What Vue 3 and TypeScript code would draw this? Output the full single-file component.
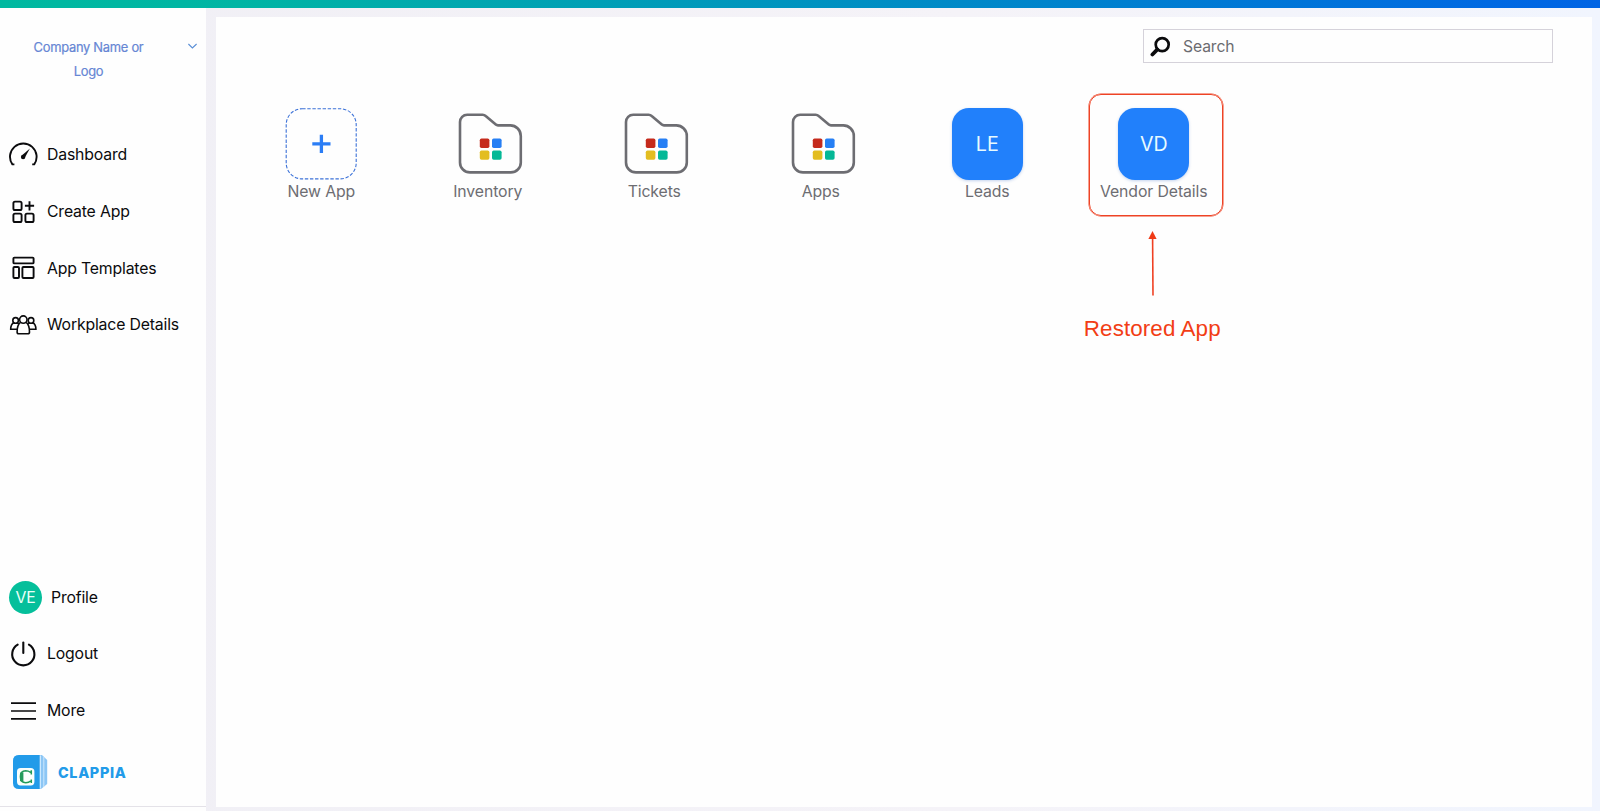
<script setup lang="ts">
interface Tile {
  label: string
  kind: 'new' | 'folder' | 'app'
  initials?: string
  highlighted?: boolean
}

const tiles: Tile[] = [
  { label: 'New App', kind: 'new' },
  { label: 'Inventory', kind: 'folder' },
  { label: 'Tickets', kind: 'folder' },
  { label: 'Apps', kind: 'folder' },
  { label: 'Leads', kind: 'app', initials: 'LE' },
  { label: 'Vendor Details', kind: 'app', initials: 'VD', highlighted: true },
]
</script>

<template>
  <div class="page">
    <div class="topbar"></div>
    <div class="body">
      <aside class="sidebar">
        <div class="company">
          <span class="company-name">Company Name or<br />Logo</span>
          <svg class="chevron" width="12" height="8" viewBox="0 0 12 8">
            <path d="M1.4 2 L5.4 6 L9.6 2" fill="none" stroke="#5b8fd6" stroke-width="1.1" />
          </svg>
        </div>

        <nav class="nav">
          <a class="row">
            <svg class="icon" width="30" height="30" viewBox="0 0 30 30" fill="none" stroke="#0b0b0d">
              <path d="M6.4 24.4 H4.4 A13.3 13.3 0 1 1 26.2 24.4 H24.2" stroke-width="1.9" />
              <path d="M13.8 15.6 L21.9 8.6 L16.9 17.6Z" fill="#0b0b0d" stroke="none" />
              <circle cx="15.1" cy="17" r="2.2" fill="#0b0b0d" stroke="none" />
            </svg>
            <span>Dashboard</span>
          </a>
          <a class="row">
            <svg class="icon" width="30" height="30" viewBox="0 0 30 30" fill="none" stroke="#0b0b0d" stroke-width="1.9">
              <rect x="5.4" y="4.6" width="8.2" height="8.4" rx="1.6" />
              <rect x="5.4" y="16.6" width="8.2" height="8.4" rx="1.6" />
              <rect x="17.4" y="16.6" width="8.2" height="8.4" rx="1.6" />
              <path d="M21.5 4.2 V13.4 M16.9 8.8 H26.1" />
            </svg>
            <span>Create App</span>
          </a>
          <a class="row">
            <svg class="icon" width="30" height="30" viewBox="0 0 30 30" fill="none" stroke="#0b0b0d" stroke-width="1.9">
              <rect x="5.4" y="4.6" width="20.2" height="5.8" rx="1" />
              <rect x="5.4" y="14" width="5.6" height="11" rx="1" />
              <rect x="14.4" y="14" width="11.2" height="11" rx="1" />
            </svg>
            <span>App Templates</span>
          </a>
          <a class="row">
            <svg class="icon" width="30" height="30" viewBox="0 0 30 30" fill="none" stroke="#0b0b0d" stroke-width="1.6">
              <circle cx="7.6" cy="10.4" r="2.8" />
              <circle cx="23" cy="10.4" r="2.8" />
              <circle cx="15.3" cy="9.6" r="3.7" />
              <path d="M12.5 12.4 C10.2 14 9.2 16.6 9.1 21.9 Q9.1 23.8 10.8 23.8 H19.8 Q21.5 23.8 21.5 21.9 C21.4 16.6 20.4 14 18.1 12.4" />
              <path d="M5.9 12.5 C3.7 13.8 2.7 16 2.7 19.2 H9.2 M9.2 12.6 L10.9 14.1" />
              <path d="M24.7 12.5 C26.9 13.8 27.9 16 27.9 19.2 H21.4 M21.4 12.6 L19.7 14.1" />
            </svg>
            <span>Workplace Details</span>
          </a>
        </nav>

        <div class="nav nav-bottom">
          <a class="row profile">
            <span class="avatar">VE</span>
            <span>Profile</span>
          </a>
          <a class="row">
            <svg class="icon" width="30" height="30" viewBox="0 0 30 30" fill="none" stroke="#0b0b0d" stroke-width="2.1" stroke-linecap="round">
              <path d="M9.7 5.7 A11.1 11.1 0 1 0 20.9 5.7" />
              <path d="M15.3 3.6 V14" />
            </svg>
            <span>Logout</span>
          </a>
          <a class="row">
            <svg class="icon" width="30" height="30" viewBox="0 0 30 30" stroke="#0b0b0d" stroke-width="1.7">
              <path d="M3 7.2 H28 M3 15 H28 M3 22.8 H28" />
            </svg>
            <span>More</span>
          </a>
        </div>

        <div class="brand">
          <svg class="brand-mark" width="35" height="36" viewBox="0 0 35 36">
            <path d="M6 1 H29 L34.2 6 V30 L28 35 H6 L0 29 V7 Q0 1 6 1Z" fill="#8cc6f5" />
            <path d="M6 1 H26.6 V35 H6 Q0 35 0 29 V7 Q0 1 6 1Z" fill="#229be9" />
            <path d="M27.4 1.5 V34.5" stroke="#d4edff" stroke-width="1" />
            <path d="M30.8 3 V33" stroke="#cbe7fc" stroke-width="1" />
            <rect x="4" y="14" width="17.4" height="17.4" rx="3.6" fill="#fafffc" />
            <path d="M18.3 20.4 V16.3 M17.6 18.3 Q15.4 16.8 12.6 16.8 Q7.4 17 7.4 22.8 Q7.4 28.6 12.8 28.7 Q15.8 28.7 17.6 27 M18.3 29 V25.4" fill="none" stroke="#239b5b" stroke-width="1.5" />
            <path d="M8.7 18.6 V27.2" stroke="#239b5b" stroke-width="3.4" />
          </svg>
          <span class="brand-name">CLAPPIA</span>
        </div>
        <div class="sidebar-end"></div>
      </aside>

      <main class="main">
        <div class="search">
          <svg width="21" height="21" viewBox="0 0 21 21" fill="none" stroke="#0b0b0d">
            <circle cx="12.2" cy="8.6" r="6.5" stroke-width="2.7" />
            <path d="M7.2 13.6 L2.4 18.5" stroke-width="3.8" stroke-linecap="round" />
          </svg>
          <span>Search</span>
        </div>

        <section class="tiles">
          <div v-for="tile in tiles" :key="tile.label" class="tile">
            <div v-if="tile.kind === 'new'" class="tile-art">
              <svg width="72" height="72" viewBox="0 0 72 72" fill="none">
                <rect x="1.2" y="0.7" width="70" height="70.2" rx="16" stroke="#3c72d8" stroke-width="1.1" stroke-dasharray="3.4 1.7" />
                <path d="M36.4 26.7 V44.9 M27.3 35.8 H45.5" stroke="#2b7df5" stroke-width="3.3" />
              </svg>
            </div>
            <div v-else-if="tile.kind === 'folder'" class="tile-art">
              <svg class="folder" width="72" height="72" viewBox="0 0 72 72">
                <path
                  d="M10.2 6.8 H25.6 Q27.4 6.8 28.7 8 L38.8 16.6 Q39.7 17.4 41 17.4 H53.3 A10.5 10.5 0 0 1 63.8 28 V54.4 A10 10 0 0 1 53.8 64.4 H13 A10 10 0 0 1 3 54.4 V14 A7.2 7.2 0 0 1 10.2 6.8Z"
                  fill="none" stroke="#6d6d72" stroke-width="2.6" />
                <rect x="22.8" y="30.5" width="9.6" height="9.4" rx="1.7" fill="#c52a1c" />
                <rect x="35" y="30.5" width="9.6" height="9.4" rx="1.7" fill="#267ff4" />
                <rect x="22.8" y="42.6" width="9.6" height="9.2" rx="1.7" fill="#e3bd20" />
                <rect x="35" y="42.6" width="9.6" height="9.2" rx="1.7" fill="#04b896" />
              </svg>
            </div>
            <div v-else class="tile-art app">{{ tile.initials }}</div>
            <span class="tile-label">{{ tile.label }}</span>

            <div v-if="tile.highlighted" class="callout">
              <div class="callout-frame"></div>
              <svg class="callout-arrow" width="10" height="66" viewBox="0 0 10 66">
                <path d="M4.6 8 L5 65.5" stroke="#ef4023" stroke-width="1.6" />
                <path d="M4.5 1 L8.6 9 H0.4Z" fill="#ef3a16" />
              </svg>
              <span class="callout-text">Restored App</span>
            </div>
          </div>
        </section>
      </main>
    </div>
  </div>
</template>

<style>
body {
  margin: 0;
  overflow: hidden;
}
</style>

<style scoped>
.page {
  width: 1600px;
  height: 811px;
  display: flex;
  flex-direction: column;
  background: linear-gradient(90deg, #f0eff5, #f5f3f8 60%, #f1f5fe);
  font-family: Inter, "Liberation Sans", sans-serif;
  color: #0b0b0d;
}
.topbar {
  height: 7.5px;
  flex: none;
  background: linear-gradient(90deg, #00b9a0 0%, #00b5a4 15%, #0069e2 93%, #0064e4 100%);
}
.body {
  flex: 1;
  min-height: 0;
  display: flex;
}
.sidebar {
  width: 206px;
  display: flex;
  flex-direction: column;
  background: #fefefe;
}
.company {
  height: 119px;
  flex: none;
  box-sizing: border-box;
  display: flex;
  align-items: flex-start;
  padding: 28.5px 7px 0 28px;
}
.company-name {
  width: 121px;
  text-align: center;
  font-size: 12.9px;
  letter-spacing: -0.27px;
  line-height: 23.6px;
  color: #6686d4;
  -webkit-text-stroke: 0.2px #6686d4;
}
.chevron {
  margin: 5.5px 0 0 38px;
}
.nav {
  display: flex;
  flex-direction: column;
}
.row {
  height: 56.7px;
  display: flex;
  align-items: center;
  gap: 9px;
  padding-left: 8px;
  font-size: 15.8px;
  letter-spacing: -0.17px;
  white-space: nowrap;
}
.icon {
  flex: none;
}
.nav-bottom {
  margin-top: auto;
}
.avatar {
  width: 33px;
  height: 33px;
  margin-left: 1px;
  border-radius: 50%;
  background: #05bf9b;
  color: #e9fff8;
  display: flex;
  align-items: center;
  justify-content: center;
}
.brand {
  height: 67.1px;
  flex: none;
  display: flex;
  align-items: center;
  padding-left: 13px;
  gap: 10px;
}
.brand-mark {
  flex: none;
}
.brand-name {
  font-size: 14.4px;
  letter-spacing: 0.65px;
  font-weight: 800;
  color: #229be9;
}
.sidebar-end {
  height: 4px;
  flex: none;
  border-top: 1px solid #e4e2e8;
}
.main {
  flex: none;
  width: 1376px;
  margin: 9.5px 0 4px 10px;
  background: #fefefe;
  display: flex;
  flex-direction: column;
}
.search {
  width: 410px;
  height: 34px;
  box-sizing: border-box;
  margin: 12px 39px 0 0;
  align-self: flex-end;
  border: 1px solid #d5d2da;
  display: flex;
  align-items: center;
  gap: 12px;
  padding-left: 6px;
  font-size: 15.7px;
  letter-spacing: -0.1px;
  color: #6b6b70;
}
.tiles {
  display: grid;
  grid-template-columns: repeat(6, 166.5px);
  margin: 45px 0 0 22px;
}
.tile {
  position: relative;
  display: flex;
  flex-direction: column;
  align-items: center;
}
.tile-art {
  width: 72px;
  height: 72px;
}
.tile-art svg {
  display: block;
}
.folder {
  margin-left: 5px;
}
.app {
  width: 71px;
  border-radius: 17px;
  background: #2180fb;
  box-shadow: 0 1px 3px rgba(60, 110, 200, 0.3);
  color: #e8fbff;
  font-size: 19.6px;
  display: flex;
  align-items: center;
  justify-content: center;
}
.tile-label {
  margin-top: 1px;
  font-size: 15.8px;
  letter-spacing: -0.1px;
  line-height: 22px;
  color: #6d6d72;
  white-space: nowrap;
}
.callout {
  position: absolute;
  top: -14px;
  left: 50%;
  width: 136px;
  margin-left: -66px;
  display: flex;
  flex-direction: column;
  align-items: center;
}
.callout-frame {
  width: 134px;
  height: 122px;
  box-sizing: border-box;
  border: 1px solid #ee4325;
  box-shadow: 0 0 0 0.5px #ee4325;
  border-radius: 12px;
}
.callout-arrow {
  margin: 14px 6px 0 0;
}
.callout-text {
  margin: 19px 7px 0 0;
  font-family: "Liberation Sans", Arial, sans-serif;
  font-size: 22.4px;
  letter-spacing: 0.1px;
  line-height: 28px;
  color: #f23d15;
  white-space: nowrap;
}
</style>
